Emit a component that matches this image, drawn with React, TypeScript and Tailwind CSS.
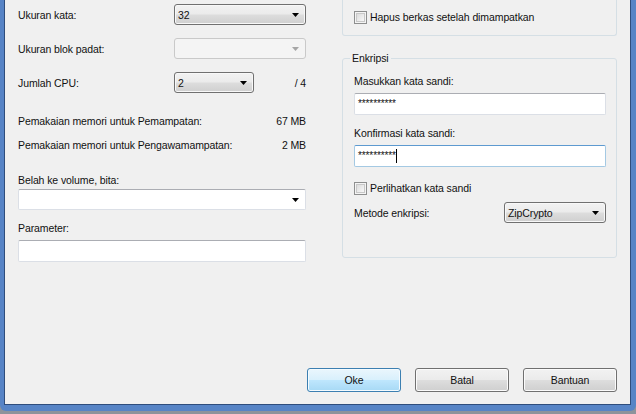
import React from 'react';

const btnGray =
  'bg-[linear-gradient(#f2f2f2_0%,#ebebeb_48%,#dddddd_52%,#cfcfcf_100%)] border-[#707070]';
const btnBlue =
  'bg-[linear-gradient(#eaf6fd_0%,#d9f0fc_48%,#bee6fd_52%,#a7d9f5_100%)] border-[#3c7fb1]';

function Arrow({ color = '#000' }: { color?: string }) {
  return (
    <svg width="7" height="4" viewBox="0 0 7 4" className="shrink-0">
      <path d="M0 0h7L3.5 4z" fill={color} />
    </svg>
  );
}

function Combo({ value, className = '', disabled = false }: { value?: string; className?: string; disabled?: boolean }) {
  if (disabled) {
    return (
      <div className={`flex h-[21px] items-center justify-end rounded-[3px] border border-[#c9c9c9] bg-[#f4f4f4] pr-[6px] ${className}`}>
        <Arrow color="#a6a6a6" />
      </div>
    );
  }
  return (
    <div
      className={`flex h-[21px] items-center justify-between rounded-[3px] border pl-[3px] pr-[6px] shadow-[inset_0_0_0_1px_#f8f8f8] ${btnGray} ${className}`}
    >
      <span>{value}</span>
      <Arrow />
    </div>
  );
}

function TextBox({ children, focused = false, className = '' }: { children?: React.ReactNode; focused?: boolean; className?: string }) {
  return (
    <div
      className={`flex h-[22px] items-center rounded-[2px] border bg-white pl-[3px] ${
        focused ? 'border-[#a4c9e3] border-t-[#5d9ad0]' : 'border-[#dbdfe6] border-t-[#abadb3]'
      } ${className}`}
    >
      {children}
    </div>
  );
}

function CheckBox({ label }: { label: string }) {
  return (
    <div className="flex items-center gap-[3px]">
      <div className="flex h-[13px] w-[13px] items-center justify-center border border-[#8e8f8f] bg-[#f4f4f4]">
        <div className="h-[9px] w-[9px] border border-[#c8c8c8] bg-gradient-to-br from-[#dcdcdc] to-[#f8f8f8]" />
      </div>
      <span>{label}</span>
    </div>
  );
}

function LabeledRow({ label, children, className = '' }: { label: string; children: React.ReactNode; className?: string }) {
  return (
    <div className={`flex items-center ${className}`}>
      <span className="w-[156px] shrink-0">{label}</span>
      {children}
    </div>
  );
}

export default function App() {
  return (
    <div className="h-[414px] w-[636px] overflow-hidden bg-[#8d939b] font-['Liberation_Sans',Arial,sans-serif] text-[10.5px] leading-[14px] tracking-[-0.1px] text-[#111]">
      {/* window frame */}
      <div className="h-[411px] rounded-b-[6px] bg-[#5784c6] pb-[6px] pl-[4px] pr-[5px]">
        <div className="flex h-full flex-col border-x border-b border-[#2f4d7c] bg-[#f0f0f0] pl-[13px] pr-[13px] pb-[12px]">
          <div className="flex gap-[36px]">
            {/* left column */}
            <div className="flex w-[288px] flex-col">
              <LabeledRow label="Ukuran kata:" className="mt-[4px]">
                <Combo value="32" className="flex-1" />
              </LabeledRow>
              <LabeledRow label="Ukuran blok padat:" className="mt-[13px]">
                <Combo disabled className="flex-1" />
              </LabeledRow>
              <LabeledRow label="Jumlah CPU:" className="mt-[13px]">
                <Combo value="2" className="w-[80px]" />
                <span className="ml-auto">/ 4</span>
              </LabeledRow>
              <div className="mt-[21px] flex justify-between">
                <span>Pemakaian memori untuk Pemampatan:</span>
                <span>67 MB</span>
              </div>
              <div className="mt-[10px] flex justify-between">
                <span>Pemakaian memori untuk Pengawamampatan:</span>
                <span>2 MB</span>
              </div>
              <div className="mt-[21px]">Belah ke volume, bita:</div>
              <div className="mt-[2px] flex h-[21px] items-center justify-end rounded-[2px] border border-[#dbdfe6] border-t-[#abadb3] bg-white pr-[6px]">
                <Arrow />
              </div>
              <div className="mt-[11px]">Parameter:</div>
              <TextBox className="mt-[5px]" />
            </div>

            {/* right column */}
            <div className="flex w-[275px] flex-col">
              <div className="flex h-[36px] items-start rounded-b-[3px] border-x border-b border-[#d5dfe5] pl-[11px] pt-[10px]">
                <CheckBox label="Hapus berkas setelah dimampatkan" />
              </div>

              <div className="relative mt-[22px] flex h-[200px] flex-col rounded-[3px] border border-[#d5dfe5] pl-[11px] pr-[10px] pt-[15px]">
                <span className="absolute left-[7px] top-[-8px] bg-[#f0f0f0] px-[2px]">Enkripsi</span>
                <div>Masukkan kata sandi:</div>
                <TextBox className="mt-[5px]">
                  <span className="text-[10px] leading-[10px]">**********</span>
                </TextBox>
                <div className="mt-[11px]">Konfirmasi kata sandi:</div>
                <TextBox focused className="mt-[5px]">
                  <span className="text-[10px] leading-[10px]">**********</span>
                  <span className="h-[14px] w-px bg-black" />
                </TextBox>
                <div className="mt-[14px]">
                  <CheckBox label="Perlihatkan kata sandi" />
                </div>
                <div className="mt-[7px] flex items-center justify-between">
                  <span>Metode enkripsi:</span>
                  <Combo value="ZipCrypto" className="w-[102px]" />
                </div>
              </div>
            </div>
          </div>

          {/* buttons */}
          <div className="mt-auto flex justify-end gap-[14px]">
            <button className={`h-[24px] w-[94px] rounded-[3px] border shadow-[inset_0_0_0_1px_#f4fbff] ${btnBlue}`}>Oke</button>
            <button className={`h-[24px] w-[94px] rounded-[3px] border shadow-[inset_0_0_0_1px_#fbfbfb] ${btnGray}`}>Batal</button>
            <button className={`h-[24px] w-[94px] rounded-[3px] border shadow-[inset_0_0_0_1px_#fbfbfb] ${btnGray}`}>Bantuan</button>
          </div>
        </div>
      </div>
    </div>
  );
}
